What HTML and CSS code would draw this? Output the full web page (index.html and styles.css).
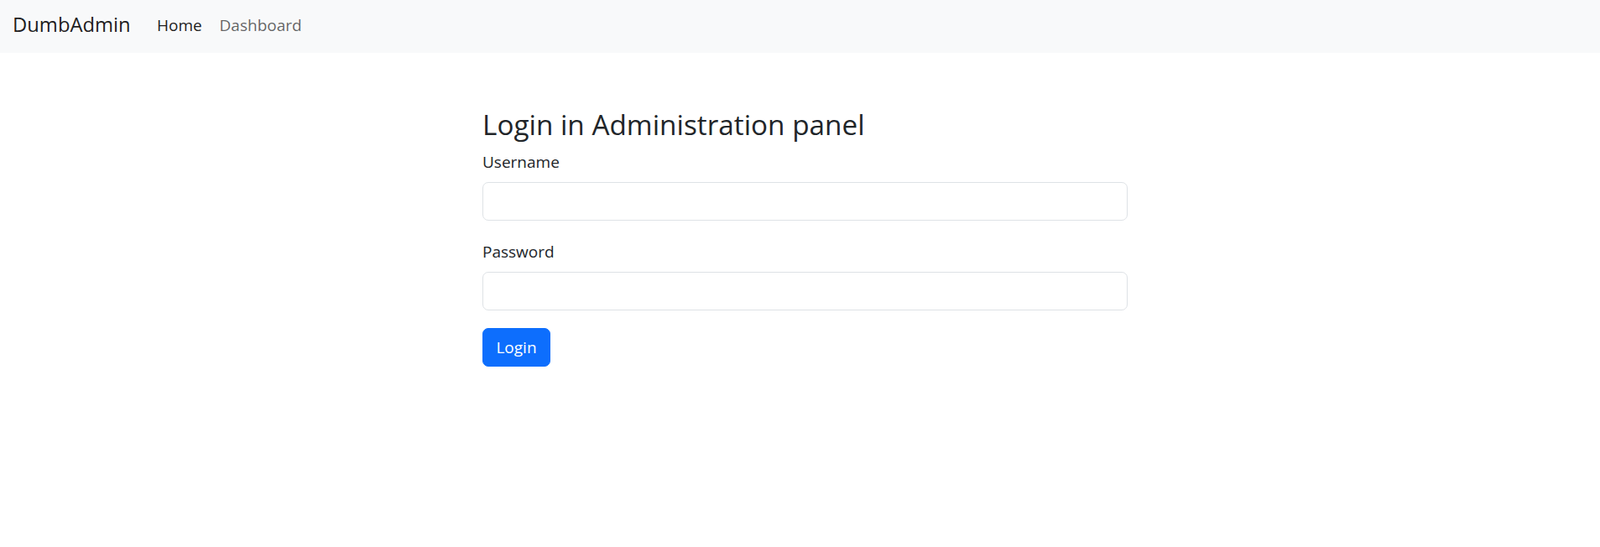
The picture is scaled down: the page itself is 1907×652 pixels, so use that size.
FILE: index.html
```html
<!DOCTYPE html>
<html lang="en">
<head>
<meta charset="utf-8">
<title>DumbAdmin</title>
<link rel="stylesheet" href="styles.css">
</head>
<body>
<nav class="navbar">
  <a class="brand" href="#">DumbAdmin</a>
  <ul class="nav">
    <li><a class="nav-link active" href="#">Home</a></li>
    <li><a class="nav-link" href="#">Dashboard</a></li>
  </ul>
</nav>
<main class="container">
  <h3 class="title">Login in Administration panel</h3>
  <form class="form">
    <div class="field">
      <label class="label" for="username">Username</label>
      <input class="control" type="text" id="username">
    </div>
    <div class="field">
      <label class="label" for="password">Password</label>
      <input class="control" type="password" id="password">
    </div>
    <button class="btn" type="button">Login</button>
  </form>
</main>
</body>
</html>
```
FILE: styles.css
```css
* { box-sizing: border-box; }
html, body { margin: 0; padding: 0; }
body {
  font-family: "Open Sans", "Noto Sans", sans-serif;
  color: #212529;
  background: #fff;
}
a { text-decoration: none; }

.navbar {
  height: 63px;
  background: #f8f9fa;
  display: flex;
  align-items: flex-start;
  padding-left: 15px;
}
.brand {
  font-size: 23.8px;
  line-height: 58px;
  color: rgba(0, 0, 0, 0.9);
  margin-right: 21px;
}
.nav {
  list-style: none;
  margin: 0;
  padding: 0;
  display: flex;
}
.nav-link {
  display: block;
  font-size: 19px;
  line-height: 60px;
  padding: 0 10.4px;
  color: rgba(0, 0, 0, 0.62);
}
.nav-link.active { color: rgba(0, 0, 0, 0.9); }

.container {
  max-width: 781px;
  margin: 0 auto;
  padding: 65px 0 0 12px;
}
.title {
  margin: 0 0 11px;
  font-size: 33.3px;
  line-height: 40px;
  font-weight: 400;
  color: #212529;
}
.form { display: flex; flex-direction: column; align-items: flex-start; }
.field { width: 100%; margin-bottom: 21px; }
.field:first-child { margin-bottom: 23px; }
.label {
  display: block;
  font-size: 19px;
  line-height: 29px;
  margin-bottom: 9px;
}
.control {
  display: block;
  width: 100%;
  height: 46px;
  border: 1px solid #dee2e6;
  border-radius: 7px;
  background: #fff;
  font: inherit;
  font-size: 19px;
  padding: 0 14px;
}
.btn {
  width: 81px;
  height: 46px;
  padding: 1px 0 0;
  border: 1px solid #0d6efd;
  border-radius: 7px;
  background: #0d6efd;
  color: #fff;
  font-family: inherit;
  font-size: 19px;
  line-height: 43px;
  text-align: center;
}
```
